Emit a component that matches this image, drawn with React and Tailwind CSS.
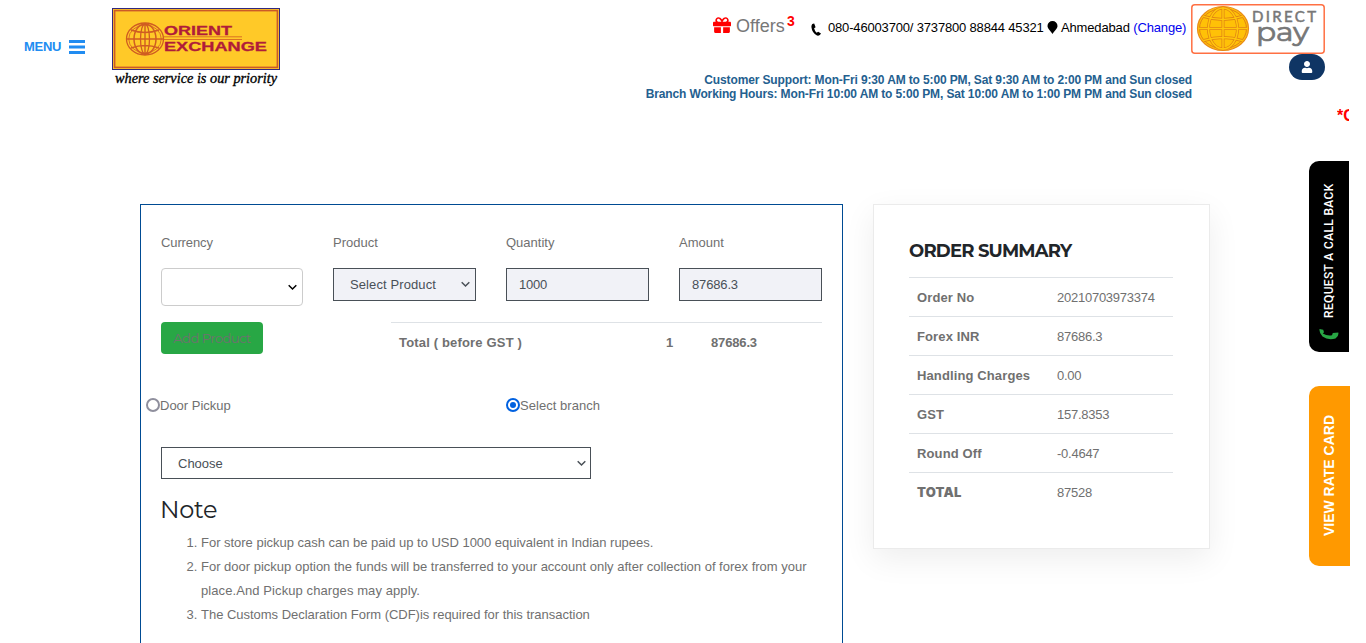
import React from "react";
import { FaGift, FaUser } from "react-icons/fa";

const summary = [
  ["Order No", "20210703973374"],
  ["Forex INR", "87686.3"],
  ["Handling Charges", "0.00"],
  ["GST", "157.8353"],
  ["Round Off", "-0.4647"],
  ["TOTAL", "87528"],
];

function Chevron() {
  return (
    <svg width="9" height="7" viewBox="0 0 9 7" fill="none" stroke="currentColor" strokeWidth="1.5">
      <path d="M0.7 1.2 4.5 5 8.3 1.2" />
    </svg>
  );
}

function Logo() {
  return (
    <svg width="168" height="82" viewBox="0 0 168 82" className="block">
      <rect x="0.5" y="0.5" width="167" height="61" fill="#ffc928" stroke="#33287d" />
      <rect x="2.6" y="2.6" width="162.8" height="56.8" fill="none" stroke="#cc5a28" strokeWidth="1.6" />
      <g fill="none" stroke="#cf5c22" strokeWidth="1.2">
        <ellipse cx="33" cy="31" rx="18.5" ry="16" strokeWidth="1.3" />
        <ellipse cx="33" cy="31" rx="16.3" ry="14" strokeWidth="0.8" />
        <ellipse cx="33" cy="31" rx="11" ry="15" strokeWidth="1.5" />
        <ellipse cx="33" cy="31" rx="4.5" ry="15" strokeWidth="1.3" />
        <path d="M33 15v32M15 31h36M19 22q14 5 28 0M19 40q14-5 28 0" strokeWidth="1.4" />
        <path d="M52 28.8h78M52 31.5h78" strokeWidth="0.8" />
      </g>
      <g fill="#b01c3a" stroke="#b01c3a" strokeWidth="0.3" fontFamily="'Liberation Sans', sans-serif" fontWeight="700">
        <text x="52" y="26.9" fontSize="12.4" textLength="68" lengthAdjust="spacingAndGlyphs">ORIENT</text>
        <text x="52" y="43.2" fontSize="12.8" textLength="103" lengthAdjust="spacingAndGlyphs">EXCHANGE</text>
      </g>
      <text x="3" y="75" fontSize="14.5" fontFamily="'Liberation Serif', serif" fontStyle="italic" fill="#000" stroke="#000" strokeWidth="0.35" textLength="162" lengthAdjust="spacingAndGlyphs">
        where service is our priority
      </text>
    </svg>
  );
}

function DirectPay() {
  return (
    <svg width="134" height="50" viewBox="0 0 134 50" className="block">
      <rect x="0.8" y="0.8" width="132.4" height="48.4" rx="3" fill="#fff" stroke="#ff7043" strokeWidth="1.5" />
      <ellipse cx="32" cy="24.5" rx="25.5" ry="22" fill="#ffc107" stroke="#e88b1a" strokeWidth="1.2" />
      <g fill="none" stroke="#e08214" strokeWidth="3">
        <path d="M32 4v41M8 24.5h48M13 12.5q19 6 38 0M13 36.5q19-6 38 0" />
        <ellipse cx="32" cy="24.5" rx="14.5" ry="20.5" />
        <ellipse cx="32" cy="24.5" rx="23.5" ry="20" strokeWidth="1" />
      </g>
      <g fill="none" stroke="#ffc60c" strokeWidth="1.5">
        <path d="M32 3.5v42M7.5 24.5h49M12.5 12.4q19.500 6.200 39 0M12.500 36.600q19.500-6.200 39 0" />
        <ellipse cx="32" cy="24.5" rx="14.5" ry="20.5" />
      </g>
      <g fill="#777" stroke="#777">
        <text x="61" y="18.3" fontSize="15" fontFamily="Lato, sans-serif" strokeWidth="0.5" textLength="64" lengthAdjust="spacing">DIRECT</text>
        <text x="65" y="36.8" fontSize="26.5" fontFamily="Montserrat, Lato, sans-serif" strokeWidth="0.7" textLength="53" lengthAdjust="spacingAndGlyphs">pay</text>
      </g>
    </svg>
  );
}

function Header() {
  return (
    <header className="flex h-[103px] items-start pl-6">
      <div className="mt-[39px] flex w-[88px] items-center text-[13px] leading-4 font-bold text-[#218cf1]">
        <span className="w-[45px] tracking-[-0.3px]">MENU</span>
        <svg width="16" height="14" viewBox="0 0 16 14" fill="currentColor">
          <path d="M0 0h16v3H0zM0 5.5h16v3H0zM0 11h16v3H0z" />
        </svg>
      </div>
      <div className="mt-2">
        <Logo />
      </div>
      <div className="flex w-[912px] flex-col items-end">
        <div className="flex h-[53px] w-[479px] items-start text-[13px] leading-4 text-black">
          <FaGift className="mt-[16px] text-[18px] text-[#ff0000]" />
          <span className="ml-[5px] mt-[15px] w-[51px] text-[18px] leading-[22px] text-[#777]">Offers</span>
          <span className="mt-[13px] w-[24px] text-[14px] font-bold text-[#ff0000]">3</span>
          <svg className="mt-[23px]" width="10" height="13" viewBox="0 0 10 13">
            <path d="M3.2 0.5Q0.3 0.6 0.4 4 1 9.8 6 12.6 9 13.3 10 10.6L7.2 8.7 5.6 9.7Q3.6 7.8 3.1 5.2L4.6 4.2Z" fill="#000" />
          </svg>
          <span className="ml-[7px] mt-[20px] w-[219px] tracking-[-0.17px] whitespace-nowrap">080-46003700/ 3737800 88844 45321</span>
          <svg className="mt-[21px]" width="11" height="13" viewBox="0 0 11 13">
            <path d="M5.5 0A5 5 0 0 0 .5 5C.5 8 4 10 5.5 13 7 10 10.5 8 10.5 5a5 5 0 0 0-5-5z" />
          </svg>
          <span className="ml-[3px] mt-[20px] tracking-[-0.15px] whitespace-nowrap">
            Ahmedabad <span className="text-[#0000ee]">(Change)</span>
          </span>
        </div>
        <div className="mt-5 text-right text-[12px] leading-[14px] font-bold tracking-[-0.13px] whitespace-nowrap text-[#24608f]">
          <p>Customer Support: Mon-Fri 9:30 AM to 5:00 PM, Sat 9:30 AM to 2:00 PM and Sun closed</p>
          <p>Branch Working Hours: Mon-Fri 10:00 AM to 5:00 PM, Sat 10:00 AM to 1:00 PM PM and Sun closed</p>
        </div>
      </div>
      <div className="-ml-px mt-1 flex flex-col items-end">
        <DirectPay />
        <div className="flex h-[26px] w-9 items-center justify-center rounded-[13px] bg-[#0f3564] text-white">
          <FaUser className="text-[12px]" />
        </div>
      </div>
    </header>
  );
}

function OrderForm() {
  return (
    <section className="h-[500px] w-[703px] shrink-0 border border-[#004b93] pl-5 pt-7">
      <div className="flex gap-[30px]">
        <div className="w-[142px]">
          <label className="block leading-5 tracking-[-0.12px]">Currency</label>
          <div className="mt-[15px] flex h-[38px] items-center justify-end rounded-[4px] border border-[#ccc] pr-[5px] pt-px text-black">
            <Chevron />
          </div>
        </div>
        <div className="w-[143px]">
          <label className="block leading-5">Product</label>
          <div className="mt-[15px] flex h-[33px] items-center justify-between border border-[#495057] bg-[#f1f2f7] pl-4 pr-[5px] text-[#495057]">
            <span className="tracking-[0.1px]">Select Product</span>
            <Chevron />
          </div>
        </div>
        <div className="w-[143px]">
          <label className="block leading-5">Quantity</label>
          <div className="mt-[15px] flex h-[33px] items-center border border-[#495057] bg-[#f1f2f7] pl-3 tracking-[-0.2px] text-[#495057]">1000</div>
        </div>
        <div className="w-[143px]">
          <label className="block leading-5">Amount</label>
          <div className="mt-[15px] flex h-[33px] items-center border border-[#495057] bg-[#f1f2f7] pl-3 tracking-[-0.15px] text-[#495057]">87686.3</div>
        </div>
      </div>
      <div className="mt-4 flex">
        <button className="h-8 w-[102px] rounded-[4px] bg-[#28a745] pt-[2px] font-[Montserrat,Inter] text-[13px] font-normal tracking-[-0.5px] whitespace-nowrap text-[#707070]">Add Product</button>
        <div className="ml-32 flex h-[38px] w-[431px] items-center border-t border-[#dee2e6] pl-2 pt-[2px] font-bold">
          <span className="w-[267px] tracking-[0.17px]">Total ( before GST )</span>
          <span className="w-[45px]">1</span>
          <span className="tracking-[-0.15px]">87686.3</span>
        </div>
      </div>
      <div className="-ml-[15px] mt-[35px] flex h-5 items-center">
        <div className="flex w-[360px] items-center">
          <span className="size-[14px] rounded-full border-2 border-[#8f8f9d]" />
          <span className="pt-px">Door Pickup</span>
        </div>
        <span className="flex size-[14px] items-center justify-center rounded-full border-2 border-[#0061e0]">
          <span className="size-[6px] rounded-full bg-[#0061e0]" />
        </span>
        <span className="pt-px tracking-[0.05px]">Select branch</span>
      </div>
      <div className="mt-8 flex h-8 w-[430px] items-center justify-between border border-[#495057] pl-4 pr-[4px] text-[#495057]">
        <span className="pt-px">Choose</span>
        <Chevron />
      </div>
      <h4 className="-ml-px mt-[17px] font-[Montserrat,Inter] text-[24px] leading-7 font-normal tracking-[-0.3px] text-[#212529]">Note</h4>
      <ol className="mt-[7px] list-decimal pl-10 leading-6">
        <li className="tracking-[-0.02px]">For store pickup cash can be paid up to USD 1000 equivalent in Indian rupees.</li>
        <li>
          For door pickup option the funds will be transferred to your account only after collection of forex from your
          <br />
          <span className="tracking-[0.09px]">place.And Pickup charges may apply.</span>
        </li>
        <li className="tracking-[-0.02px]">The Customs Declaration Form (CDF)is required for this transaction</li>
      </ol>
    </section>
  );
}

function OrderSummary() {
  return (
    <aside className="h-[345px] w-[337px] shrink-0 border border-[#ebebeb] px-[35px] pt-[34px] shadow-[0_10px_30px_rgba(0,0,0,0.07)]">
      <h3 className="h-[38px] font-[Montserrat,Inter] text-[18px] leading-6 font-bold tracking-[-0.8px] whitespace-nowrap text-[#212529]">ORDER SUMMARY</h3>
      <dl className="w-[264px]">
        {summary.map(([label, value]) => (
          <div key={label} className="flex h-[39px] items-center border-t border-[#dee2e6] pl-2 pt-px whitespace-nowrap">
            <dt className={label === "TOTAL" ? "w-[140px] font-[Inter] font-black tracking-[0.2px]" : "w-[140px] font-bold tracking-[0.12px]"}>{label}</dt>
            <dd className="tracking-[-0.25px]">{value}</dd>
          </div>
        ))}
      </dl>
    </aside>
  );
}

export default function App() {
  return (
    <div className="relative h-[643px] w-[1366px] overflow-hidden bg-white font-['Liberation_Sans',Arial,sans-serif] text-[13px] text-[#707070]">
      <Header />
      <div className="ml-[1337px] h-[101px] w-[12px] overflow-hidden pt-px text-[16px] leading-6 font-bold whitespace-nowrap text-[#ff0000]">*C</div>
      <main className="flex items-start gap-[30px] pl-[140px]">
        <OrderForm />
        <OrderSummary />
      </main>
      <div className="absolute left-[1309px] top-[161px] flex h-[191px] w-10 flex-col items-center justify-end rounded-l-[10px] bg-black pb-[12px]">
        <span className="rotate-180 font-[Roboto] text-[12px] leading-4 font-medium whitespace-nowrap text-white [writing-mode:vertical-rl] h-[133px] tracking-[0.35px]">REQUEST A CALL BACK</span>
        <svg className="mt-[10px]" width="20" height="12" viewBox="0 0 20 12">
          <path d="M0.5 1 4.2 1.7 5 4.2 3.8 5.5Q8 8 13 7.2L13.8 5 19.3 4.5Q20 8.5 16.5 10.5 9 12.5 3.5 8.5 0 5 0.5 1Z" fill="#28a745" />
        </svg>
      </div>
      <div className="absolute left-[1309px] top-[386px] flex h-[180px] w-[41px] items-center justify-center rounded-l-[10px] bg-[#ff9900] pr-[2px]">
        <span className="rotate-180 text-[14px] leading-5 font-bold whitespace-nowrap text-white [writing-mode:vertical-rl]">VIEW RATE CARD</span>
      </div>
    </div>
  );
}
